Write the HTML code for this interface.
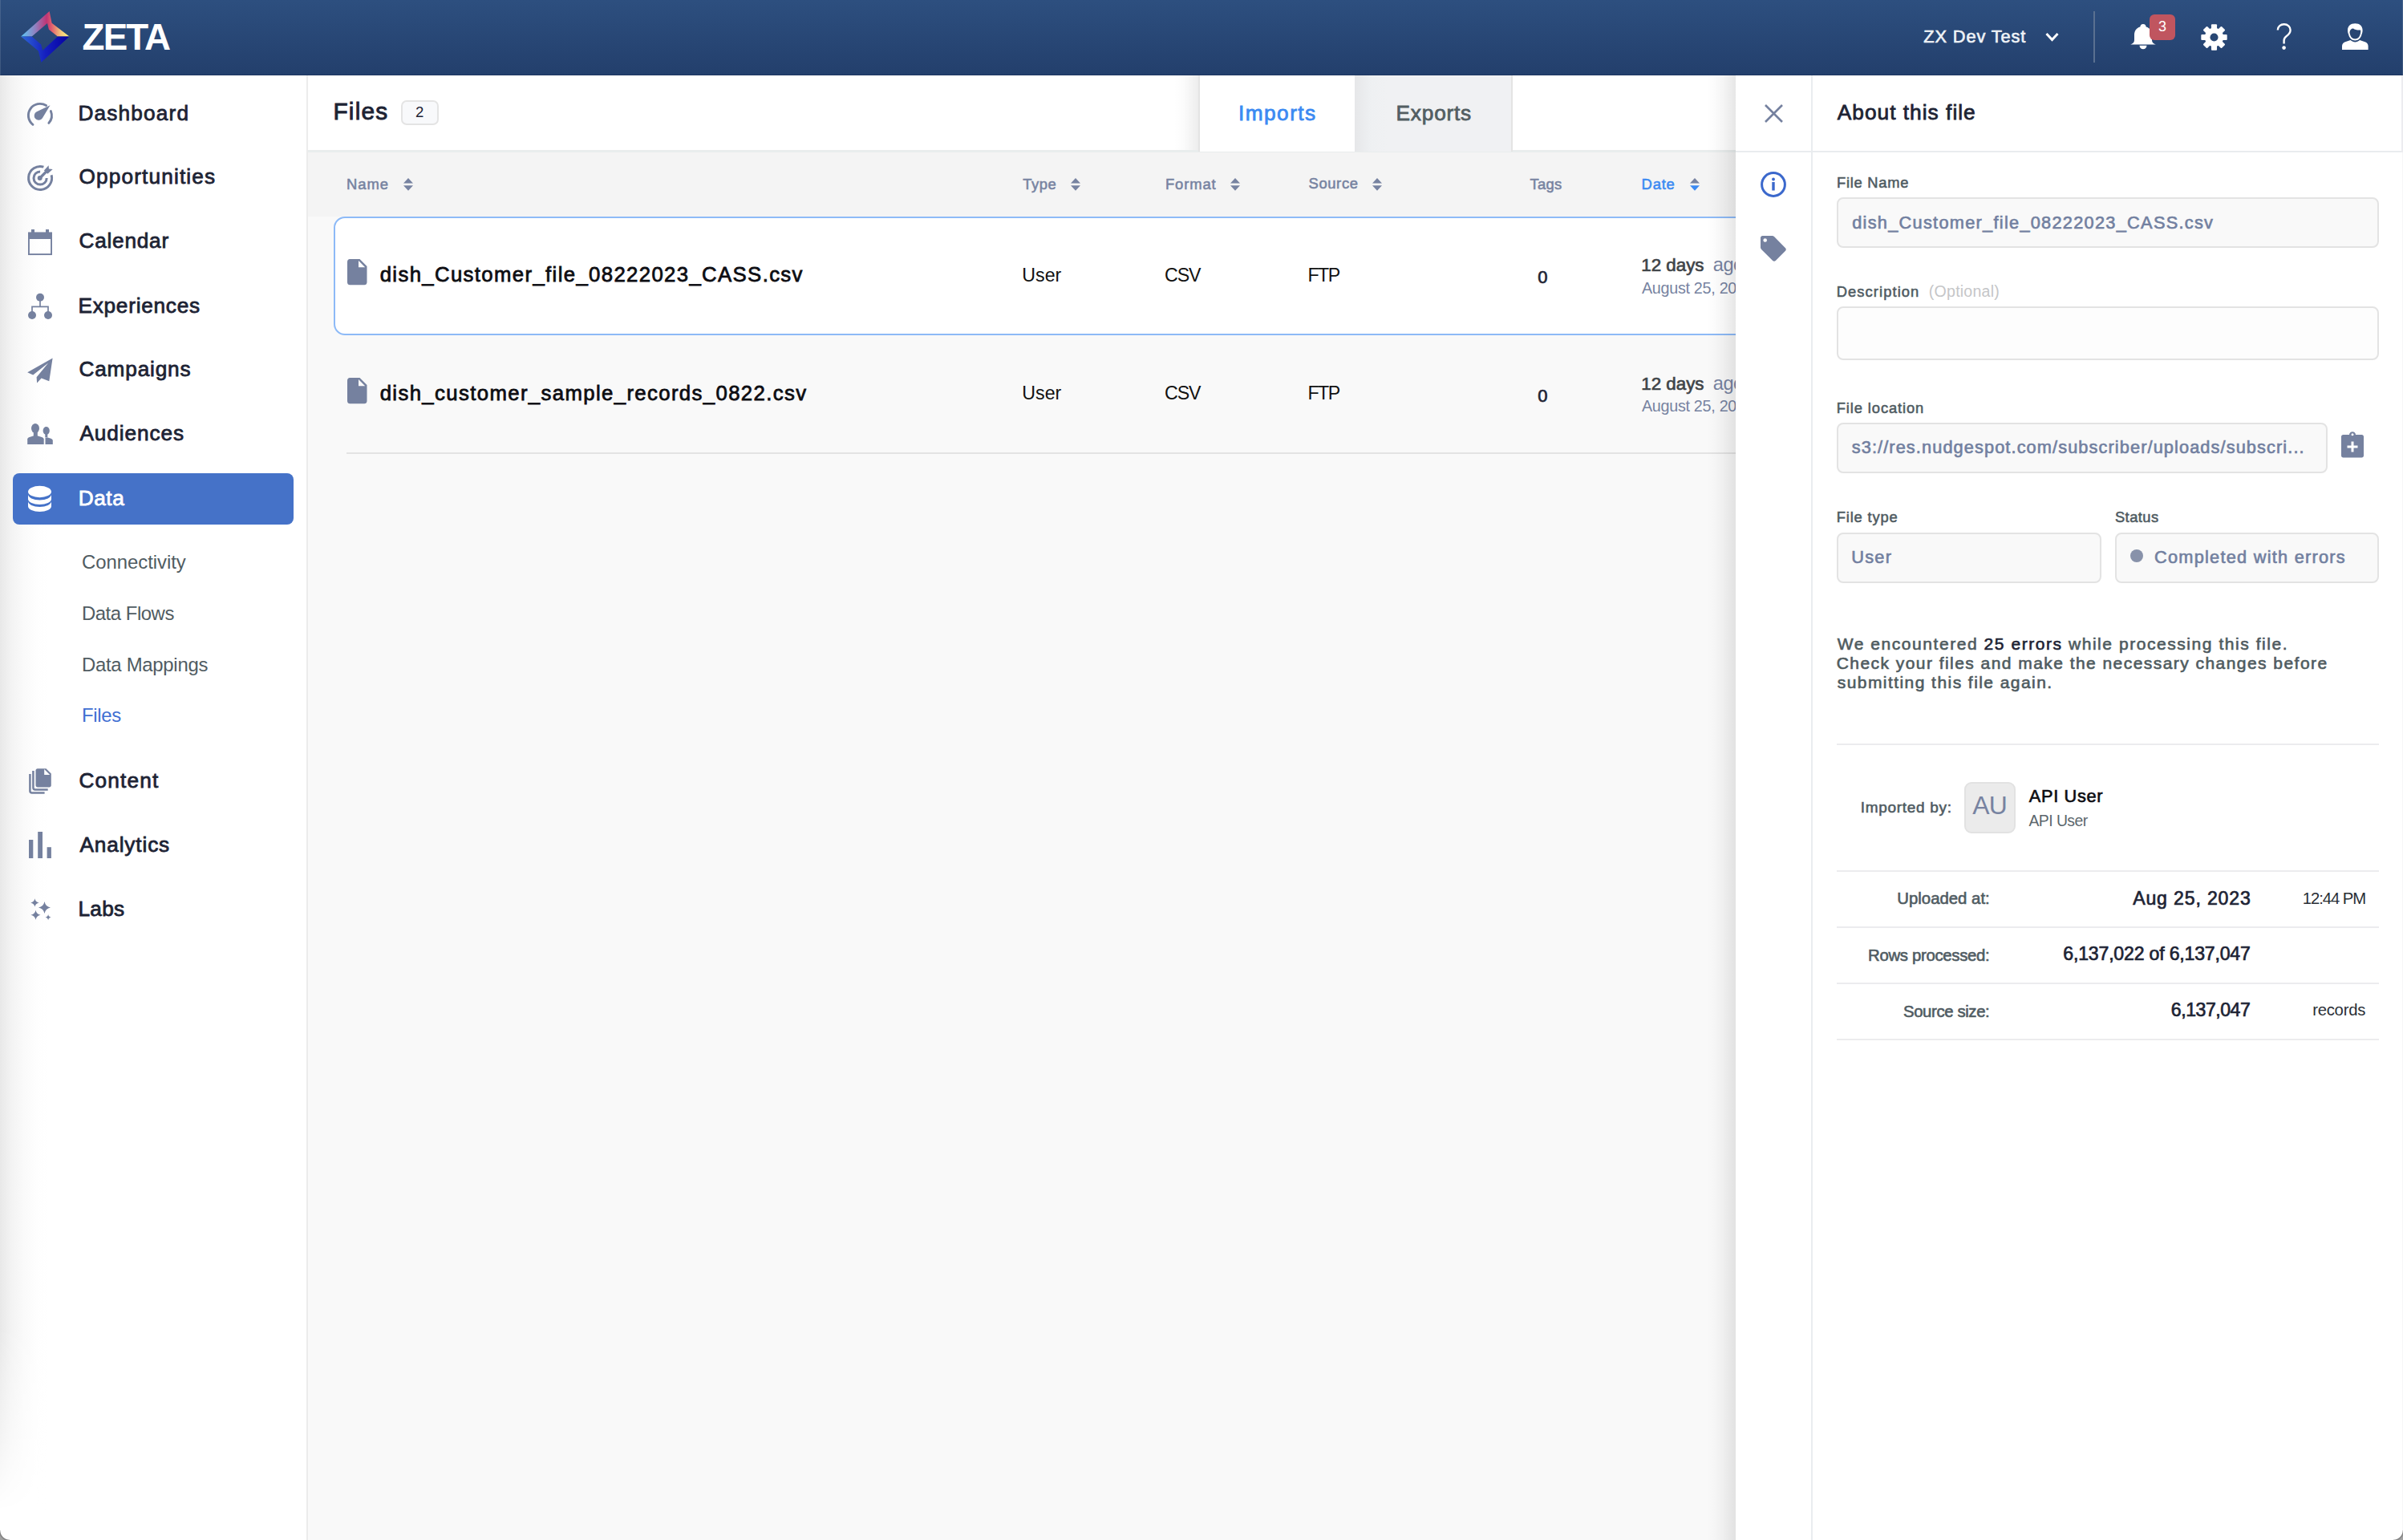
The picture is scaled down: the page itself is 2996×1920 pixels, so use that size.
<!DOCTYPE html>
<html><head><meta charset="utf-8"><style>
html,body{margin:0;padding:0;}
body{width:2996px;height:1920px;overflow:hidden;position:relative;background:#fff;font-family:"Liberation Sans",sans-serif;}
.a{position:absolute;}
.t{position:absolute;white-space:nowrap;font-family:"Liberation Sans",sans-serif;}
.t b{font-weight:normal;}
svg{position:absolute;overflow:visible;}
@media (max-width:1600px){html{zoom:0.5;}}
</style></head><body>
<!-- window bg corners -->
<div class="a" style="left:0;top:0;width:2996px;height:1920px;background:#fff;"></div>

<!-- ===== HEADER ===== -->
<div class="a" style="left:0;top:0;width:2996px;height:94px;background:linear-gradient(#2d4f7f,#233f6c);"></div>
<div class="a" style="left:0;top:93px;width:2996px;height:1px;background:#1c3560;"></div>
<div class="a" style="left:0;top:0;width:1px;height:94px;background:rgba(255,255,255,0.12);"></div>
<div class="a" style="left:2995px;top:0;width:1px;height:94px;background:rgba(255,255,255,0.12);"></div>
<svg style="left:0;top:0" width="100" height="94" viewBox="0 0 100 94">
  <defs>
    <linearGradient id="lgTop" x1="26" y1="0" x2="86.5" y2="0" gradientUnits="userSpaceOnUse">
      <stop offset="0" stop-color="#5ccaf6"/>
      <stop offset="0.3" stop-color="#9080c0"/>
      <stop offset="0.53" stop-color="#c03474"/>
      <stop offset="0.64" stop-color="#e0606e"/>
      <stop offset="0.82" stop-color="#f2c47a"/>
      <stop offset="1" stop-color="#fff87a"/>
    </linearGradient>
    <linearGradient id="lgBot" x1="26" y1="0" x2="86.5" y2="0" gradientUnits="userSpaceOnUse">
      <stop offset="0" stop-color="#2f68d6"/>
      <stop offset="0.5" stop-color="#1520c0"/>
      <stop offset="1" stop-color="#0500a0"/>
    </linearGradient>
  </defs>
  <polygon fill="url(#lgTop)" points="26.1,45.5 61.6,14.1 64.6,28.7 86.5,45.5 71.9,45.5 60.9,36.7 59,29 39.7,45.5"/>
  <polygon fill="url(#lgBot)" points="26.1,45.5 39.7,45.5 51.2,55.5 53.1,63 71.9,45.5 86.5,45.5 51.4,77.7 47.8,63.5"/>
</svg>
<!-- selector divider -->
<div class="a" style="left:2610px;top:14px;width:2px;height:64px;background:#5a7090;"></div>
<!-- chevron -->
<svg style="left:2548px;top:38px" width="22" height="16" viewBox="0 0 22 16">
  <polyline points="3.5,4 10.5,11.5 17.5,4" fill="none" stroke="#fff" stroke-width="3"/>
</svg>
<!-- bell -->
<svg style="left:2656px;top:30px" width="33" height="33" viewBox="0 0 33 33">
  <path fill="#fff" d="M16 0 C13.5 0 12.5 1.8 12.3 3.5 C7.5 4.8 5 8.5 5 14 L5 20 C5 22.5 3.5 24.2 1 25.2 L0 25.6 L32 25.6 L31 25.2 C28.5 24.2 27 22.5 27 20 L27 14 C27 8.5 24.5 4.8 19.7 3.5 C19.5 1.8 18.5 0 16 0 Z"/>
  <path fill="#fff" d="M11.5 26.8 A4.5 4.5 0 0 0 20.5 26.8 Z"/>
</svg>
<!-- badge -->
<div class="a" style="left:2680px;top:18px;width:32px;height:32px;border-radius:6px;background:#c0555f;"></div>
<!-- gear -->
<svg style="left:2743.7px;top:30px" width="33" height="33" viewBox="-16.3 -16 32.6 32">
  <g fill="#fff">
    <circle r="11.5"/>
    <rect x="-3.5" y="-16" width="7" height="32" rx="1"/>
    <rect x="-3.5" y="-16" width="7" height="32" rx="1" transform="rotate(45)"/>
    <rect x="-3.5" y="-16" width="7" height="32" rx="1" transform="rotate(90)"/>
    <rect x="-3.5" y="-16" width="7" height="32" rx="1" transform="rotate(135)"/>
  </g>
  <circle r="5" fill="#284774"/>
</svg>
<!-- question -->
<svg style="left:2838px;top:29px" width="22" height="34" viewBox="0 0 22 34">
  <path d="M1.8 8.5 C1.8 3.8 5.6 1.3 9.7 1.3 C14.3 1.3 17.6 4.3 17.6 8.5 C17.6 12.2 15.5 14 12.8 15.9 C10.8 17.3 9.6 18.7 9.6 21.5 L9.6 25.5" fill="none" stroke="#fff" stroke-width="2.4"/>
  <circle cx="9.6" cy="30.6" r="2.3" fill="#fff"/>
</svg>
<!-- user -->
<svg style="left:2919.7px;top:29px" width="33" height="34" viewBox="0 0 33 34">
  <path fill="#fff" d="M16.3 0.3 C10.5 0.3 7 3.5 7 8.8 C7 10.5 7.3 12.2 8 13.5 C8.8 18 12 21.5 16.3 21.5 C20.6 21.5 23.8 18 24.6 13.5 C25.3 12.2 25.6 10.5 25.6 8.8 C25.6 3.5 22.1 0.3 16.3 0.3 Z M0 33 L0 28.5 C0 26 1.5 24 4 23.2 L10.5 21 C12.3 22.6 14.3 23.4 16.3 23.4 C18.3 23.4 20.3 22.6 22.1 21 L28.6 23.2 C31.1 24 32.6 26 32.6 28.5 L32.6 33 Z"/>
  <path fill="#284572" d="M9.5 11 C10 8 11.5 6.5 14 6.5 C16 8.2 19.5 8.8 23 8.5 C23.3 9.5 23.3 10.5 23.1 11.5 C22.6 16.5 19.8 19.5 16.3 19.5 C12.8 19.5 10 16.5 9.5 11.5 Z"/>
</svg>

<!-- ===== SIDEBAR ===== -->
<div class="a" style="left:0;top:94px;width:382px;height:1826px;background:#fff;"></div>
<div class="a" style="left:0;top:94px;width:70px;height:1826px;background:linear-gradient(90deg,#e8e8e8 0px,#f3f3f3 14px,#fafafa 30px,#fefefe 46px,rgba(255,255,255,0) 60px);-webkit-mask-image:linear-gradient(to bottom,#000 0px,#000 1560px,rgba(0,0,0,0.5) 1700px,rgba(0,0,0,0) 1790px);"></div>
<div class="a" style="left:382px;top:94px;width:2px;height:1826px;background:#ececec;"></div>
<!-- active Data pill -->
<div class="a" style="left:16px;top:590px;width:350px;height:64px;border-radius:8px;background:#4572c8;"></div>

<!-- dashboard icon -->
<svg style="left:34px;top:128px" width="32" height="28" viewBox="0 0 32 28">
  <path d="M6.97 27.33 A14.5 14.5 0 0 1 23.58 3.6" fill="none" stroke="#75819f" stroke-width="2.9" stroke-linecap="round"/>
  <path d="M29.34 10.47 A14.5 14.5 0 0 1 26.85 25.41" fill="none" stroke="#75819f" stroke-width="2.9" stroke-linecap="round"/>
  <path fill="#75819f" d="M28.5 3.2 L18.91 19.13 A5.5 5.5 0 1 1 11.79 11.36 Z"/>
</svg>
<!-- opportunities icon -->
<svg style="left:34px;top:206px" width="33" height="33" viewBox="0 0 33 33">
  <path d="M30.11 12.25 A14.5 14.5 0 1 1 20.41 2.15" fill="none" stroke="#75819f" stroke-width="3"/>
  <path d="M24.2 16 A8.1 8.1 0 1 1 16.1 7.9" fill="none" stroke="#75819f" stroke-width="3"/>
  <circle cx="15.7" cy="16" r="3" fill="#75819f"/>
  <path d="M15.7 16 L24 7.6" stroke="#75819f" stroke-width="3.4"/>
  <path fill="#75819f" d="M20.9 6.4 L26.6 0.2 L26.9 4.6 L31.7 5 L25.4 10.8 Z"/>
</svg>
<!-- calendar -->
<svg style="left:35px;top:286px" width="30" height="32" viewBox="0 0 30 32">
  <rect x="0.95" y="4.5" width="28.1" height="26.6" fill="none" stroke="#75819f" stroke-width="1.9"/>
  <rect x="0" y="3.8" width="30" height="8.2" fill="#75819f"/>
  <rect x="4" y="0" width="4" height="4" fill="#75819f"/>
  <rect x="22" y="0" width="4" height="4" fill="#75819f"/>
</svg>
<!-- experiences -->
<svg style="left:34px;top:365px" width="32" height="34" viewBox="0 0 32 34">
  <circle cx="16" cy="5.8" r="5" fill="#75819f"/>
  <circle cx="6" cy="28" r="5" fill="#75819f"/>
  <circle cx="26" cy="28" r="5" fill="#75819f"/>
  <path d="M16 8 L16 17.4 M6 25 L6 17.4 L26 17.4 L26 25" fill="none" stroke="#75819f" stroke-width="1.7"/>
</svg>
<!-- campaigns -->
<svg style="left:34px;top:446px" width="32" height="33" viewBox="0 0 32 33">
  <path fill="#75819f" d="M31.6 0.5 L0.2 18.2 L7.2 21.6 L26.2 6.4 L11.6 24.3 L12.1 31.5 L17.6 25.5 L27.3 29.2 Z"/>
</svg>
<!-- audiences -->
<svg style="left:34px;top:527px" width="32" height="28" viewBox="0 0 32 28">
  <g fill="#75819f">
    <ellipse cx="10" cy="7" rx="5" ry="6"/>
    <rect x="7.8" y="11" width="5" height="6"/>
    <path d="M0.2 27 L0.2 20.6 C0.2 19.5 1 18.7 2 18.2 L7.5 16.6 L13.3 16.6 L18.8 18.2 C19.8 18.7 20.7 19.5 20.7 20.6 L20.7 27 Z"/>
    <ellipse cx="23.7" cy="10" rx="4.1" ry="5"/>
    <rect x="22.3" y="13.5" width="3" height="5"/>
    <path d="M22.5 27 L22.5 18.9 L25.5 18.4 L29.5 19.8 C30.8 20.4 31.8 21.2 31.8 22.5 L31.8 27 Z"/>
  </g>
</svg>
<!-- data (database) white -->
<svg style="left:35px;top:606px" width="30" height="33" viewBox="0 0 30 33">
  <g fill="#fff">
    <ellipse cx="14.5" cy="7" rx="14.5" ry="7.2"/>
    <path d="M0 10.3 A14.5 7.2 0 0 0 29 10.3 L29 15.9 A14.5 7.2 0 0 1 0 15.9 Z"/>
    <path d="M0 18.8 A14.5 7.2 0 0 0 29 18.8 L29 24.9 A14.5 7.2 0 0 1 0 24.9 Z"/>
  </g>
</svg>
<!-- content -->
<svg style="left:36px;top:958px" width="28" height="32" viewBox="0 0 28 32">
  <path fill="#75819f" d="M10.8 0.2 L21.5 0.2 L27.8 6.5 L27.8 21 C27.8 22.5 26.8 23.5 25.3 23.5 L11 23.5 C9.5 23.5 8.5 22.5 8.5 21 L8.5 2.5 C8.5 1.2 9.5 0.2 10.8 0.2 Z"/>
  <path d="M19.2 1.1 L19.2 8 L26.2 8 Z" fill="#fff"/>
  <path d="M5.4 3 L5.4 24 Q5.4 26.4 7.8 26.4 L23.7 26.4" fill="none" stroke="#75819f" stroke-width="2.5"/>
  <path d="M1.4 7 L1.4 28 Q1.4 30.5 3.9 30.5 L19.6 30.5" fill="none" stroke="#75819f" stroke-width="2.5"/>
</svg>
<!-- analytics -->
<svg style="left:36px;top:1037px" width="28" height="34" viewBox="0 0 28 34">
  <g fill="#75819f">
    <rect x="0" y="10" width="5.3" height="23"/>
    <rect x="11.2" y="0" width="5.8" height="33"/>
    <rect x="22.6" y="19.2" width="5.3" height="13.8"/>
  </g>
</svg>
<!-- labs stars -->
<svg style="left:36px;top:1118px" width="30" height="32" viewBox="0 0 30 32">
  <g fill="#75819f">
    <path d="M7.40 2.30 Q8.22 6.58 12.50 7.40 Q8.22 8.22 7.40 12.50 Q6.58 8.22 2.30 7.40 Q6.58 6.58 7.40 2.30 Z"/>
    <path d="M19.50 5.90 Q20.70 12.20 27.00 13.40 Q20.70 14.60 19.50 20.90 Q18.30 14.60 12.00 13.40 Q18.30 12.20 19.50 5.90 Z"/>
    <path d="M8.50 16.80 Q9.46 21.84 14.50 22.80 Q9.46 23.76 8.50 28.80 Q7.54 23.76 2.50 22.80 Q7.54 21.84 8.50 16.80 Z"/>
    <path d="M24.10 21.90 Q24.69 25.01 27.80 25.60 Q24.69 26.19 24.10 29.30 Q23.51 26.19 20.40 25.60 Q23.51 25.01 24.10 21.90 Z"/>
  </g>
</svg>

<!-- ===== MAIN CONTENT ===== -->
<div class="a" style="left:384px;top:94px;width:1780px;height:93px;background:#ffffff;"></div>
<div class="a" style="left:384px;top:187px;width:1780px;height:3px;background:#e9eded;"></div>
<div class="a" style="left:384px;top:190px;width:1780px;height:80px;background:#f4f4f4;"></div>
<div class="a" style="left:384px;top:270px;width:1780px;height:1650px;background:#f9f9f9;"></div>
<!-- badge -->
<div class="a" style="left:499.5px;top:124.5px;width:43px;height:27px;border:2px solid #e4e4e4;border-radius:7px;background:#f8f9fb;"></div>
<!-- tabs -->
<div class="a" style="left:1464px;top:94px;width:30px;height:93px;background:linear-gradient(90deg,rgba(0,0,0,0),rgba(0,0,0,0.015) 40%,rgba(0,0,0,0.07));"></div>
<div class="a" style="left:1494px;top:94px;width:2px;height:95px;background:#e4e4e4;"></div>
<div class="a" style="left:1496px;top:94px;width:193px;height:95px;background:#ffffff;"></div>
<div class="a" style="left:1689px;top:94px;width:195px;height:95px;background:linear-gradient(90deg,#e6e7e9 0px,#eef0f2 20px,#f0f1f3 40px);"></div>
<div class="a" style="left:1884px;top:94px;width:2px;height:95px;background:#e4e4e4;"></div>
<!-- sort icons -->
<svg style="left:503px;top:222px" width="12" height="16" viewBox="0 0 12 16"><path d="M6 0 L12 6.5 L0 6.5 Z M0 9.3 L12 9.3 L6 15.8 Z" fill="#7783a1"/></svg>
<svg style="left:1335px;top:222px" width="12" height="16" viewBox="0 0 12 16"><path d="M6 0 L12 6.5 L0 6.5 Z M0 9.3 L12 9.3 L6 15.8 Z" fill="#7783a1"/></svg>
<svg style="left:1534px;top:222px" width="12" height="16" viewBox="0 0 12 16"><path d="M6 0 L12 6.5 L0 6.5 Z M0 9.3 L12 9.3 L6 15.8 Z" fill="#7783a1"/></svg>
<svg style="left:1711px;top:222px" width="12" height="16" viewBox="0 0 12 16"><path d="M6 0 L12 6.5 L0 6.5 Z M0 9.3 L12 9.3 L6 15.8 Z" fill="#7783a1"/></svg>
<svg style="left:2107px;top:222px" width="12" height="16" viewBox="0 0 12 16"><path d="M6 0 L12 6.5 L0 6.5 Z" fill="#7783a1"/><path d="M0 9.3 L12 9.3 L6 15.8 Z" fill="#3b8af2"/></svg>
<!-- row1 card -->
<div class="a" style="left:416px;top:270px;width:1800px;height:144px;border:2px solid #8dbaf7;border-radius:14px;background:#ffffff;"></div>
<!-- row2 separator -->
<div class="a" style="left:432px;top:564px;width:1800px;height:2px;background:#e3e3e3;"></div>
<!-- file icons -->
<svg style="left:433px;top:323px" width="25" height="33" viewBox="0 0 25 33"><path d="M3 0 L15.5 0 L24.5 9 L24.5 29 C24.5 31 23 32.3 21.3 32.3 L3.2 32.3 C1.4 32.3 0 31 0 29 L0 3.2 C0 1.4 1.4 0 3 0 Z" fill="#75819f"/><path d="M14 2 L14 10.2 L22.2 10.2 Z" fill="#fff"/></svg>
<svg style="left:433px;top:471px" width="25" height="33" viewBox="0 0 25 33"><path d="M3 0 L15.5 0 L24.5 9 L24.5 29 C24.5 31 23 32.3 21.3 32.3 L3.2 32.3 C1.4 32.3 0 31 0 29 L0 3.2 C0 1.4 1.4 0 3 0 Z" fill="#75819f"/><path d="M14 2 L14 10.2 L22.2 10.2 Z" fill="#f9f9f9"/></svg>


<div class="t" style="left:102.60px;top:24.16px;font-size:45.70px;line-height:45.70px;font-weight:bold;letter-spacing:-1.866px;color:#ffffff">ZETA</div>
<div class="t" style="left:2398.33px;top:34.71px;font-size:21.75px;line-height:21.75px;font-weight:normal;-webkit-text-stroke:0.65px #eef2f6;letter-spacing:0.894px;color:#eef2f6">ZX Dev Test</div>
<div class="t" style="left:2691.00px;top:23.60px;font-size:18.00px;line-height:18.00px;font-weight:normal;letter-spacing:0.000px;color:#ffffff">3</div>
<div class="t" style="left:97.49px;top:127.91px;font-size:26.22px;line-height:26.22px;font-weight:normal;-webkit-text-stroke:0.79px #1d2334;letter-spacing:1.154px;color:#1d2334">Dashboard</div>
<div class="t" style="left:98.49px;top:207.41px;font-size:26.22px;line-height:26.22px;font-weight:normal;-webkit-text-stroke:0.79px #1d2334;letter-spacing:1.140px;color:#1d2334">Opportunities</div>
<div class="t" style="left:98.49px;top:287.31px;font-size:26.22px;line-height:26.22px;font-weight:normal;-webkit-text-stroke:0.79px #1d2334;letter-spacing:0.749px;color:#1d2334">Calendar</div>
<div class="t" style="left:97.49px;top:367.91px;font-size:26.22px;line-height:26.22px;font-weight:normal;-webkit-text-stroke:0.79px #1d2334;letter-spacing:0.734px;color:#1d2334">Experiences</div>
<div class="t" style="left:98.49px;top:447.41px;font-size:26.22px;line-height:26.22px;font-weight:normal;-webkit-text-stroke:0.79px #1d2334;letter-spacing:0.801px;color:#1d2334">Campaigns</div>
<div class="t" style="left:99.49px;top:527.31px;font-size:26.22px;line-height:26.22px;font-weight:normal;-webkit-text-stroke:0.79px #1d2334;letter-spacing:0.898px;color:#1d2334">Audiences</div>
<div class="t" style="left:98.49px;top:959.91px;font-size:26.22px;line-height:26.22px;font-weight:normal;-webkit-text-stroke:0.79px #1d2334;letter-spacing:1.145px;color:#1d2334">Content</div>
<div class="t" style="left:99.49px;top:1040.21px;font-size:26.22px;line-height:26.22px;font-weight:normal;-webkit-text-stroke:0.79px #1d2334;letter-spacing:0.851px;color:#1d2334">Analytics</div>
<div class="t" style="left:97.49px;top:1119.71px;font-size:26.22px;line-height:26.22px;font-weight:normal;-webkit-text-stroke:0.79px #1d2334;letter-spacing:0.290px;color:#1d2334">Labs</div>
<div class="t" style="left:97.69px;top:608.01px;font-size:26.22px;line-height:26.22px;font-weight:normal;-webkit-text-stroke:0.79px #ffffff;letter-spacing:0.571px;color:#ffffff">Data</div>
<div class="t" style="left:102.00px;top:688.79px;font-size:23.90px;line-height:23.90px;font-weight:normal;letter-spacing:-0.035px;color:#505c62">Connectivity</div>
<div class="t" style="left:102.00px;top:752.88px;font-size:23.90px;line-height:23.90px;font-weight:normal;letter-spacing:-0.460px;color:#505c62">Data Flows</div>
<div class="t" style="left:102.00px;top:816.88px;font-size:23.90px;line-height:23.90px;font-weight:normal;letter-spacing:-0.279px;color:#505c62">Data Mappings</div>
<div class="t" style="left:102.00px;top:880.18px;font-size:23.90px;line-height:23.90px;font-weight:normal;letter-spacing:-0.324px;color:#3f6fd2">Files</div>
<div class="t" style="left:415.45px;top:123.84px;font-size:29.83px;line-height:29.83px;font-weight:normal;-webkit-text-stroke:0.89px #1d2334;letter-spacing:1.186px;color:#1d2334">Files</div>
<div class="t" style="left:518.00px;top:131.19px;font-size:18.60px;line-height:18.60px;font-weight:normal;letter-spacing:0.000px;color:#1d2334">2</div>
<div class="t" style="left:1543.99px;top:128.01px;font-size:26.22px;line-height:26.22px;font-weight:normal;-webkit-text-stroke:0.79px #3b8af2;letter-spacing:1.468px;color:#3b8af2">Imports</div>
<div class="t" style="left:1740.59px;top:128.01px;font-size:26.22px;line-height:26.22px;font-weight:normal;-webkit-text-stroke:0.79px #535e62;letter-spacing:0.790px;color:#535e62">Exports</div>
<div class="t" style="left:432.08px;top:220.63px;font-size:18.43px;line-height:18.43px;font-weight:normal;-webkit-text-stroke:0.55px #7783a1;letter-spacing:0.917px;color:#7783a1">Name</div>
<div class="t" style="left:1275.28px;top:220.53px;font-size:18.43px;line-height:18.43px;font-weight:normal;-webkit-text-stroke:0.55px #7783a1;letter-spacing:0.485px;color:#7783a1">Type</div>
<div class="t" style="left:1452.98px;top:220.53px;font-size:18.43px;line-height:18.43px;font-weight:normal;-webkit-text-stroke:0.55px #7783a1;letter-spacing:0.865px;color:#7783a1">Format</div>
<div class="t" style="left:1631.48px;top:220.33px;font-size:18.43px;line-height:18.43px;font-weight:normal;-webkit-text-stroke:0.55px #7783a1;letter-spacing:0.625px;color:#7783a1">Source</div>
<div class="t" style="left:1907.48px;top:220.53px;font-size:18.43px;line-height:18.43px;font-weight:normal;-webkit-text-stroke:0.55px #7783a1;letter-spacing:0.315px;color:#7783a1">Tags</div>
<div class="t" style="left:2046.58px;top:220.53px;font-size:18.43px;line-height:18.43px;font-weight:normal;-webkit-text-stroke:0.55px #3b8af2;letter-spacing:0.793px;color:#3b8af2">Date</div>
<div class="t" style="left:473.69px;top:330.42px;font-size:25.75px;line-height:25.75px;font-weight:normal;-webkit-text-stroke:0.77px #0d0d12;letter-spacing:1.350px;color:#0d0d12">dish_Customer_file_08222023_CASS.csv</div>
<div class="t" style="left:1274.30px;top:331.58px;font-size:23.20px;line-height:23.20px;font-weight:normal;letter-spacing:0.022px;color:#111">User</div>
<div class="t" style="left:1452.10px;top:331.58px;font-size:23.20px;line-height:23.20px;font-weight:normal;letter-spacing:-1.156px;color:#111">CSV</div>
<div class="t" style="left:1630.40px;top:331.58px;font-size:23.20px;line-height:23.20px;font-weight:normal;letter-spacing:-1.464px;color:#111">FTP</div>
<div class="t" style="left:1917.33px;top:335.37px;font-size:22.04px;line-height:22.04px;font-weight:normal;-webkit-text-stroke:0.66px #1d2334;letter-spacing:0.000px;color:#1d2334">0</div>
<div class="t" style="left:2046.24px;top:320.34px;font-size:22.42px;line-height:22.42px;font-weight:normal;-webkit-text-stroke:0.67px #3f4448;letter-spacing:-0.024px;color:#3f4448">12 days</div>
<div class="t" style="left:2135.80px;top:319.34px;font-size:23.60px;line-height:23.60px;font-weight:normal;letter-spacing:-0.500px;color:#7783a1">ago</div>
<div class="t" style="left:2046.90px;top:349.57px;font-size:19.80px;line-height:19.80px;font-weight:normal;letter-spacing:-0.300px;color:#7783a1">August 25, 2023</div>
<div class="t" style="left:473.69px;top:478.32px;font-size:25.75px;line-height:25.75px;font-weight:normal;-webkit-text-stroke:0.77px #0d0d12;letter-spacing:1.362px;color:#0d0d12">dish_customer_sample_records_0822.csv</div>
<div class="t" style="left:1274.30px;top:479.48px;font-size:23.20px;line-height:23.20px;font-weight:normal;letter-spacing:0.022px;color:#111">User</div>
<div class="t" style="left:1452.10px;top:479.48px;font-size:23.20px;line-height:23.20px;font-weight:normal;letter-spacing:-1.156px;color:#111">CSV</div>
<div class="t" style="left:1630.40px;top:479.48px;font-size:23.20px;line-height:23.20px;font-weight:normal;letter-spacing:-1.464px;color:#111">FTP</div>
<div class="t" style="left:1917.33px;top:483.27px;font-size:22.04px;line-height:22.04px;font-weight:normal;-webkit-text-stroke:0.66px #1d2334;letter-spacing:0.000px;color:#1d2334">0</div>
<div class="t" style="left:2046.24px;top:468.24px;font-size:22.42px;line-height:22.42px;font-weight:normal;-webkit-text-stroke:0.67px #3f4448;letter-spacing:-0.024px;color:#3f4448">12 days</div>
<div class="t" style="left:2135.80px;top:467.24px;font-size:23.60px;line-height:23.60px;font-weight:normal;letter-spacing:-0.500px;color:#7783a1">ago</div>
<div class="t" style="left:2046.90px;top:497.47px;font-size:19.80px;line-height:19.80px;font-weight:normal;letter-spacing:-0.300px;color:#7783a1">August 25, 2023</div>
<!-- ===== DRAWER ===== -->
<div class="a" style="left:2128px;top:94px;width:36px;height:1826px;background:linear-gradient(90deg,rgba(0,0,0,0) 0px,rgba(0,0,0,0.012) 8px,rgba(0,0,0,0.04) 20px,rgba(0,0,0,0.075) 30px,rgba(0,0,0,0.095) 36px);"></div>
<div class="a" style="left:2164px;top:94px;width:832px;height:1826px;background:#ffffff;"></div>
<div class="a" style="left:2258px;top:94px;width:2px;height:1826px;background:#e9ecef;"></div>
<div class="a" style="left:2164px;top:188px;width:832px;height:2px;background:#e9ecef;"></div>
<div class="a" style="left:2994px;top:94px;width:2px;height:96px;background:#ececf0;"></div>
<div class="a" style="left:2995px;top:190px;width:1px;height:1718px;background:#f6f6f8;"></div>
<!-- close X -->
<svg style="left:2200px;top:130px" width="23" height="23" viewBox="0 0 23 23"><path d="M1 1 L22 22 M22 1 L1 22" stroke="#75819f" stroke-width="2.6"/></svg>
<!-- info -->
<svg style="left:2195px;top:214px" width="33" height="33" viewBox="0 0 33 33"><circle cx="16" cy="16" r="14.4" fill="none" stroke="#3b68cc" stroke-width="3"/><circle cx="16" cy="9.5" r="1.9" fill="#3b68cc"/><rect x="14.3" y="13" width="3.4" height="10.5" fill="#3b68cc"/></svg>
<!-- tag -->
<svg style="left:2195px;top:294px" width="33" height="33" viewBox="0 0 33 33"><path fill="#75819f" d="M2.5 0 L14.5 0 C15.5 0 16.3 0.4 17 1.1 L31 15.2 C32 16.2 32 17.8 31 18.8 L18.8 31 C17.8 32 16.2 32 15.2 31 L1.1 17 C0.4 16.3 0 15.5 0 14.5 L0 2.5 C0 1.1 1.1 0 2.5 0 Z"/><circle cx="5.7" cy="5.5" r="2.3" fill="#fff"/></svg>
<!-- inputs -->
<div class="a" style="left:2290px;top:246px;width:672px;height:59px;border:2px solid #e3e3e3;border-radius:8px;background:#f9f9f9;"></div>
<div class="a" style="left:2290px;top:382px;width:672px;height:63px;border:2px solid #e3e3e3;border-radius:8px;background:#fdfdfd;"></div>
<div class="a" style="left:2290px;top:527px;width:608px;height:59px;border:2px solid #e3e3e3;border-radius:8px;background:#f9f9f9;"></div>
<div class="a" style="left:2290px;top:664px;width:326px;height:59px;border:2px solid #e3e3e3;border-radius:8px;background:#f9f9f9;"></div>
<div class="a" style="left:2636.5px;top:664px;width:325px;height:59px;border:2px solid #e3e3e3;border-radius:8px;background:#f9f9f9;"></div>
<div class="a" style="left:2656px;top:685px;width:16px;height:16px;border-radius:50%;background:#8892aa;"></div>
<!-- clipboard plus -->
<svg style="left:2919px;top:538px" width="29" height="33" viewBox="0 0 29 33"><path fill="#75819f" d="M2.5 4 L10 4 C10 1.8 12 0.3 14 0.3 C16 0.3 18 1.8 18 4 L25.5 4 C27 4 28 5 28 6.5 L28 30 C28 31.5 27 32.5 25.5 32.5 L2.5 32.5 C1 32.5 0 31.5 0 30 L0 6.5 C0 5 1 4 2.5 4 Z"/><circle cx="14" cy="3.8" r="1.5" fill="#fff"/><path d="M14 12.5 L14 25.5 M7.5 19 L20.5 19" stroke="#fff" stroke-width="3"/></svg>
<!-- separators -->
<div class="a" style="left:2290px;top:927px;width:676px;height:2px;background:#ececee;"></div>
<div class="a" style="left:2449px;top:975px;width:60px;height:60px;border:2px solid #e2e2e2;border-radius:9px;background:#ebebeb;"></div>
<div class="a" style="left:2290px;top:1085px;width:676px;height:2px;background:#ececee;"></div>
<div class="a" style="left:2290px;top:1155px;width:676px;height:2px;background:#ececee;"></div>
<div class="a" style="left:2290px;top:1225px;width:676px;height:2px;background:#ececee;"></div>
<div class="a" style="left:2290px;top:1295px;width:676px;height:2px;background:#ececee;"></div>

<!-- window corners -->
<div class="a" style="left:0;top:1908px;width:12px;height:12px;background:radial-gradient(circle at 12px 0px, rgba(160,160,160,0) 11.2px, #7c7c7c 12.2px, #a2a2a2 14px);"></div>
<div class="a" style="left:2984px;top:1908px;width:12px;height:12px;background:radial-gradient(circle at 0px 0px, rgba(160,160,160,0) 11.2px, #7c7c7c 12.2px, #a2a2a2 14px);"></div>

<div class="t" style="left:2290.69px;top:127.03px;font-size:26.31px;line-height:26.31px;font-weight:normal;-webkit-text-stroke:0.79px #1d2334;letter-spacing:1.012px;color:#1d2334">About this file</div>
<div class="t" style="left:2290.08px;top:218.82px;font-size:18.34px;line-height:18.34px;font-weight:normal;-webkit-text-stroke:0.55px #4f5b62;letter-spacing:0.716px;color:#4f5b62">File Name</div>
<div class="t" style="left:2309.23px;top:266.51px;font-size:21.75px;line-height:21.75px;font-weight:normal;-webkit-text-stroke:0.65px #7280a0;letter-spacing:1.277px;color:#7280a0">dish_Customer_file_08222023_CASS.csv</div>
<div class="t" style="left:2289.78px;top:354.82px;font-size:18.34px;line-height:18.34px;font-weight:normal;-webkit-text-stroke:0.55px #4f5b62;letter-spacing:1.087px;color:#4f5b62">Description</div>
<div class="t" style="left:2404.80px;top:353.74px;font-size:19.60px;line-height:19.60px;font-weight:normal;letter-spacing:0.222px;color:#c5c6c8">(Optional)</div>
<div class="t" style="left:2289.78px;top:499.52px;font-size:18.34px;line-height:18.34px;font-weight:normal;-webkit-text-stroke:0.55px #4f5b62;letter-spacing:0.895px;color:#4f5b62">File location</div>
<div class="t" style="left:2308.73px;top:546.91px;font-size:21.75px;line-height:21.75px;font-weight:normal;-webkit-text-stroke:0.65px #7280a0;letter-spacing:1.101px;color:#7280a0">s3://res.nudgespot.com/subscriber/uploads/subscri...</div>
<div class="t" style="left:2289.68px;top:635.72px;font-size:18.34px;line-height:18.34px;font-weight:normal;-webkit-text-stroke:0.55px #4f5b62;letter-spacing:0.847px;color:#4f5b62">File type</div>
<div class="t" style="left:2636.98px;top:635.72px;font-size:18.34px;line-height:18.34px;font-weight:normal;-webkit-text-stroke:0.55px #4f5b62;letter-spacing:0.431px;color:#4f5b62">Status</div>
<div class="t" style="left:2308.23px;top:683.51px;font-size:21.75px;line-height:21.75px;font-weight:normal;-webkit-text-stroke:0.65px #7280a0;letter-spacing:1.256px;color:#7280a0">User</div>
<div class="t" style="left:2686.03px;top:683.51px;font-size:21.75px;line-height:21.75px;font-weight:normal;-webkit-text-stroke:0.65px #7280a0;letter-spacing:1.249px;color:#7280a0">Completed with errors</div>
<div class="t" style="left:2290.71px;top:791.95px;font-size:21.00px;line-height:21.00px;font-weight:normal;-webkit-text-stroke:0.63px #4f5b60;letter-spacing:1.552px;color:#4f5b60">We encountered <b style="color:#1d2334;-webkit-text-stroke-color:#1d2334">25 errors</b> while processing this file.</div>
<div class="t" style="left:2289.71px;top:815.75px;font-size:21.00px;line-height:21.00px;font-weight:normal;-webkit-text-stroke:0.63px #4f5b60;letter-spacing:1.449px;color:#4f5b60">Check your files and make the necessary changes before</div>
<div class="t" style="left:2290.71px;top:839.65px;font-size:21.00px;line-height:21.00px;font-weight:normal;-webkit-text-stroke:0.63px #4f5b60;letter-spacing:1.443px;color:#4f5b60">submitting this file again.</div>
<div class="t" style="left:2319.78px;top:997.15px;font-size:19.00px;line-height:19.00px;font-weight:normal;-webkit-text-stroke:0.57px #4f5b62;letter-spacing:0.691px;color:#4f5b62">Imported by:</div>
<div class="t" style="left:2459.30px;top:989.18px;font-size:31.90px;line-height:31.90px;font-weight:normal;letter-spacing:-0.771px;color:#7783a1">AU</div>
<div class="t" style="left:2529.83px;top:982.11px;font-size:21.75px;line-height:21.75px;font-weight:normal;-webkit-text-stroke:0.65px #0d0d12;letter-spacing:0.667px;color:#0d0d12">API User</div>
<div class="t" style="left:2529.50px;top:1013.61px;font-size:19.40px;line-height:19.40px;font-weight:normal;letter-spacing:-0.561px;color:#5c676d">API User</div>
<div class="t" style="left:2365.31px;top:1110.42px;font-size:20.33px;line-height:20.33px;font-weight:normal;-webkit-text-stroke:0.61px #4f5b62;letter-spacing:0.014px;color:#4f5b62">Uploaded at:</div>
<div class="t" style="left:2329.10px;top:1180.52px;font-size:20.33px;line-height:20.33px;font-weight:normal;-webkit-text-stroke:0.61px #4f5b62;letter-spacing:-0.306px;color:#4f5b62">Rows processed:</div>
<div class="t" style="left:2373.00px;top:1250.62px;font-size:20.33px;line-height:20.33px;font-weight:normal;-webkit-text-stroke:0.61px #4f5b62;letter-spacing:-0.374px;color:#4f5b62">Source size:</div>
<div class="t" style="left:2659.15px;top:1108.68px;font-size:23.09px;line-height:23.09px;font-weight:normal;-webkit-text-stroke:0.69px #1d2334;letter-spacing:0.849px;color:#1d2334">Aug 25, 2023</div>
<div class="t" style="left:2572.35px;top:1178.18px;font-size:23.09px;line-height:23.09px;font-weight:normal;-webkit-text-stroke:0.69px #1d2334;letter-spacing:-0.189px;color:#1d2334">6,137,022 of 6,137,047</div>
<div class="t" style="left:2706.85px;top:1248.28px;font-size:23.09px;line-height:23.09px;font-weight:normal;-webkit-text-stroke:0.69px #1d2334;letter-spacing:-0.466px;color:#1d2334">6,137,047</div>
<div class="t" style="left:2870.80px;top:1109.54px;font-size:20.30px;line-height:20.30px;font-weight:normal;letter-spacing:-1.074px;color:#2a2f36">12:44 PM</div>
<div class="t" style="left:2883.20px;top:1248.54px;font-size:20.30px;line-height:20.30px;font-weight:normal;letter-spacing:-0.248px;color:#2a2f36">records</div>
</body></html>
